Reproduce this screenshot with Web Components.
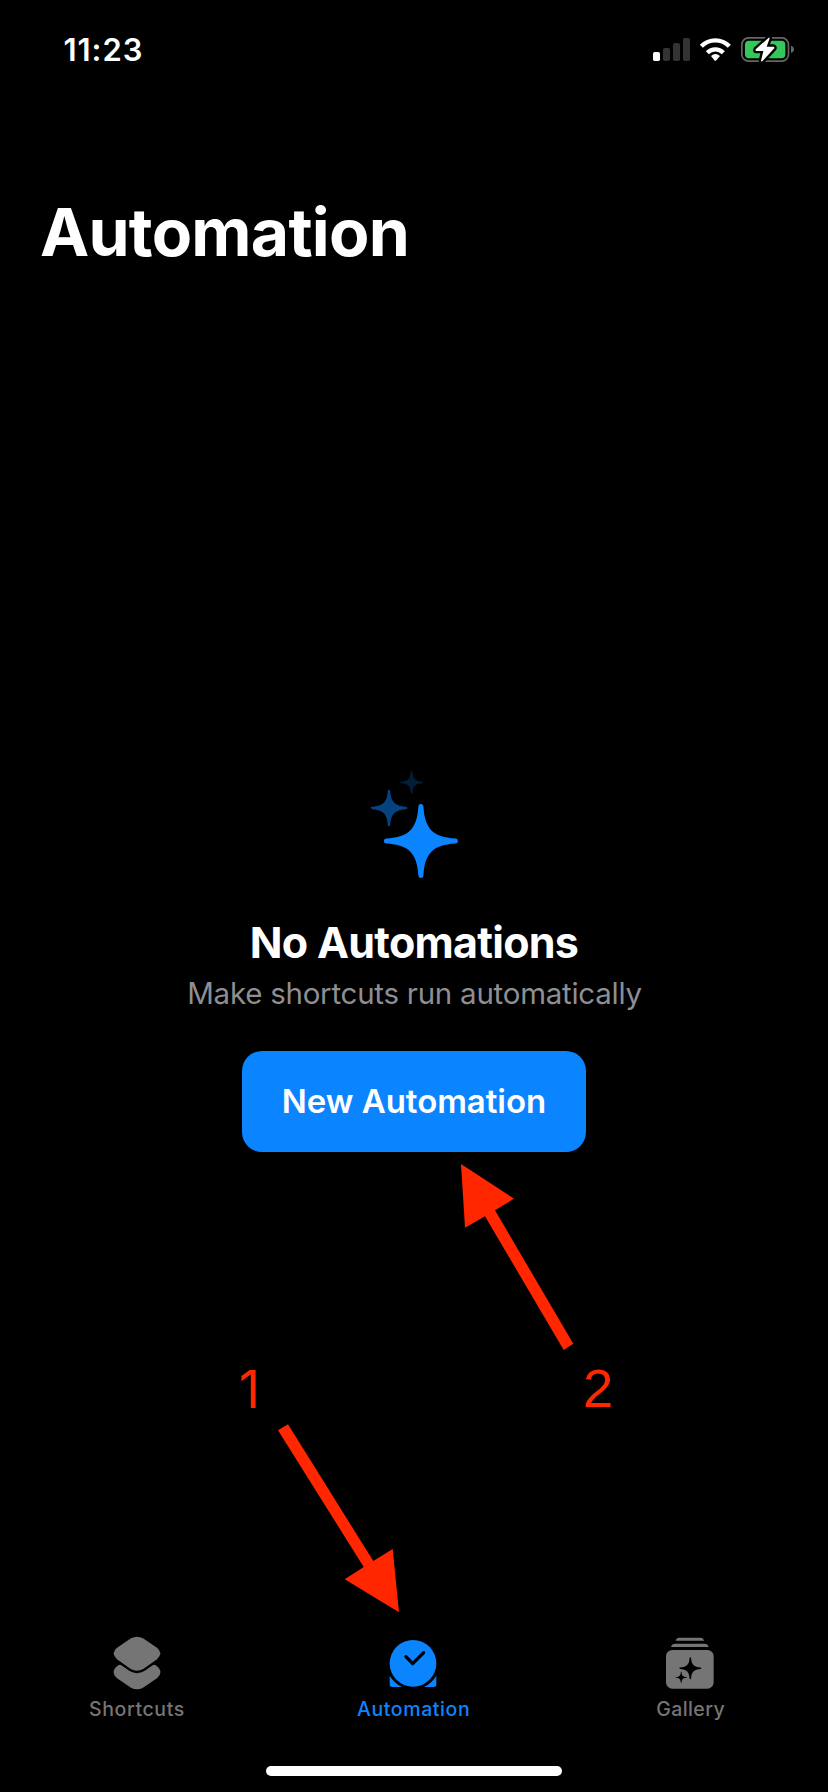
<!DOCTYPE html>
<html lang="en">
<head>
<meta charset="utf-8">
<title>Shortcuts</title>
<style>
body{margin:0;background:#000}
</style>
</head>
<body>
<shortcuts-app></shortcuts-app>
<script>
const define = (name, html) => {
  const t = document.createElement('template');
  t.innerHTML = html;
  customElements.define(name, class extends HTMLElement {
    constructor() {
      super();
      this.attachShadow({ mode: 'open' }).append(t.content.cloneNode(true));
    }
  });
};

define('status-bar', `
<style>
:host{display:flex;align-items:center;justify-content:space-between;height:98px;padding:0 33px 0 63.5px;box-sizing:border-box;color:#fff}
time{font-weight:600;font-size:31px;line-height:40px;padding-top:2px;letter-spacing:.95px}
.icons{display:flex;gap:8px}
svg{display:block;height:28px}
</style>
<time>11:23</time>
<div class="icons">
<svg width="39" viewBox="36 30 117 84"><g fill="#333"><rect x="69" y="69" width="21" height="39" rx="5"/><rect x="99" y="54" width="21" height="54" rx="5"/><rect x="129" y="39" width="21" height="69" rx="5"/></g><rect x="39" y="81" width="21" height="27" rx="5" fill="#fff"/></svg>
<svg width="33" viewBox="177 30 99 84"><g fill="none" stroke="#fff" stroke-width="13"><path d="M184 64A58 58 0 0 1 268 64"/><path d="M202 83A34 34 0 0 1 250 83"/></g><path d="M213 93Q226 81 240 93L229 106Q226 109 223 106Z" fill="#fff"/></svg>
<svg width="55" viewBox="300 30 165 84"><rect x="305.5" y="38.5" width="140" height="70" rx="20" fill="none" stroke="#666" stroke-width="5"/><rect x="315" y="47" width="121" height="53" rx="12" fill="#34c759"/><path d="M453 62Q462 65 462 73T453 84Z" fill="#666"/><path d="M386 38L347 73Q345 78 349 78L370 78L363 107Q364 110 367 109L403 70Q404 65 400 65L380 65L389 40Q389 37 386 38Z" fill="#fff" stroke="#000" stroke-width="14" paint-order="stroke" stroke-linejoin="round"/></svg>
</div>`);

define('page-title', `
<style>
:host{display:block;padding:94px 40px 0}
h1{margin:0;font-size:66px;line-height:80px;font-weight:700;letter-spacing:-.75px}
</style>
<h1><slot></slot></h1>`);

define('sparkles-icon', `
<style>:host{display:block}svg{display:block}</style>
<svg width="90" height="110" viewBox="369 769 90 110">
<defs><path id="s" d="M0-37C1.6-37 2.4-36 2.5-34.5C4-12 12-4 34.5-2.5C36-2.4 37-1.6 37 0S36 2.4 34.5 2.5C12 4 4 12 2.5 34.5C2.4 36 1.6 37 0 37S-2.4 36-2.5 34.5C-4 12-12 4-34.5 2.5C-36 2.4-37 1.6-37 0S-36-2.4-34.5-2.5C-12-4-4-12-2.5-34.5C-2.4-36-1.6-37 0-37Z"/></defs>
<use href="#s" transform="translate(420.9 841)" fill="#0a84ff"/>
<use href="#s" transform="translate(389 808) scale(.49)" fill="#05427f"/>
<use href="#s" transform="translate(411.6 782.4) scale(.31)" fill="#021e3b"/>
</svg>`);

define('primary-button', `
<style>
:host{display:block}
button{display:block;box-sizing:border-box;width:344px;height:101px;border:0;border-radius:20px;background:#0a84ff;color:#fff;font:570 33px/100px Inter,sans-serif;letter-spacing:-.05px;padding:0 0 1px;text-align:center;white-space:nowrap}
</style>
<button><slot></slot></button>`);

define('empty-state', `
<style>
:host{display:flex;flex-direction:column;align-items:center;text-align:center;padding-top:497px}
h2{margin:33px 0 0;font-size:43px;line-height:60px;font-weight:700;letter-spacing:-.74px}
p{margin:1px 0 0;font-size:29.5px;line-height:40px;color:#8e8e93;padding-left:1px;letter-spacing:-.25px}
primary-button{margin-top:38px}
</style>
<sparkles-icon></sparkles-icon>
<h2><slot name="heading"></slot></h2>
<p><slot name="detail"></slot></p>
<primary-button><slot name="action"></slot></primary-button>`);

define('tab-item', `
<style>
:host{display:flex;flex-direction:column;align-items:center;color:#757575;fill:currentColor}
:host([selected]){color:#0a84ff}
.label{font-size:19.5px;line-height:24px;font-weight:500;margin:5px -.6px 0 0;letter-spacing:var(--track,.6px)}
::slotted(svg){display:block}
</style>
<slot name="icon"></slot>
<div class="label"><slot></slot></div>`);

define('tab-bar', `
<style>
:host{display:grid;grid-template-columns:273.4px 280px 274px}
</style>
<tab-item><svg slot="icon" width="50" height="58" viewBox="95 42 150 174"><path d="M152 55Q170 45 188 55L230 83Q250 99 230 118L190 146Q170 158 150 146L110 118Q90 99 110 83Z"/><path d="M123 136L148 153Q170 166 192 153L217 136Q222 132 228 137Q251 155 231 174L188 203Q170 212 152 203L109 174Q89 155 112 137Q118 132 123 136Z"/></svg>Shortcuts</tab-item>
<tab-item selected><svg slot="icon" width="50" height="58" viewBox="145 42 150 174"><circle cx="220" cy="130" r="70"/><path d="M150 167Q164 190 187 201L158 201Q150 201 150 193ZM290 167Q276 190 253 201L282 201Q290 201 290 193Z"/><path d="M199 110L219 131L252 98" fill="none" stroke="#000" stroke-width="10" stroke-linecap="round" stroke-linejoin="round"/></svg>Automation</tab-item>
<tab-item style="--track:.4px"><svg slot="icon" width="50" height="58" viewBox="75 42 150 174"><rect x="78" y="90" width="143" height="116" rx="19"/><path d="M93 81Q95 71 106 71H193Q204 71 206 81ZM107 62Q109 53 118 53H181Q190 53 192 62Z"/><defs><path id="g" d="M0-37C1.6-37 2.4-36 2.5-34.5C4-12 12-4 34.5-2.5C36-2.4 37-1.6 37 0S36 2.4 34.5 2.5C12 4 4 12 2.5 34.5C2.4 36 1.6 37 0 37S-2.4 36-2.5 34.5C-4 12-12 4-34.5 2.5C-36 2.4-37 1.6-37 0S-36-2.4-34.5-2.5C-12-4-4-12-2.5-34.5C-2.4-36-1.6-37 0-37Z"/></defs><g fill="#000"><use href="#g" transform="translate(151 144.500) scale(.89)"/><use href="#g" transform="translate(123.500 172) scale(.45)"/></g></svg>Gallery</tab-item>`);

define('home-indicator', `
<style>:host{display:block;width:296px;height:10px;border-radius:5px;background:#fff;margin:45px auto 16px}</style>`);

define('step-marks', `
<style>
:host{position:absolute;inset:0;pointer-events:none;color:#ff2600}
svg{position:absolute;left:0;top:0}
span{position:absolute}
.one{left:239px;top:1360px;font:400 52px/60px Inter,sans-serif}
.two{left:583px;top:1359px;font:54.5px/60px "Liberation Sans",sans-serif}
</style>
<svg width="828" height="1792" fill="#ff2600"><path d="M461 1164L514 1198.700L495 1210.300L573.300 1343.700L563.700 1350L485 1216.300L465 1227.700Z"/><path d="M288 1424.300L373.300 1561L392.700 1549L399 1612.300L344.700 1579.300L363.700 1567L278 1430.300Z"/></svg>
<span class="one">1</span><span class="two">2</span>`);

define('shortcuts-app', `
<style>
:host{display:flex;flex-direction:column;position:relative;width:828px;height:1792px;background:#000;color:#fff;font-family:Inter,sans-serif;overflow:hidden}
tab-bar{margin-top:auto}
</style>
<status-bar></status-bar>
<page-title>Automation</page-title>
<empty-state><span slot="heading">No Automations</span><span slot="detail">Make shortcuts run automatically</span><span slot="action">New Automation</span></empty-state>
<tab-bar></tab-bar>
<home-indicator></home-indicator>
<step-marks></step-marks>`);
</script>
</body>
</html>
